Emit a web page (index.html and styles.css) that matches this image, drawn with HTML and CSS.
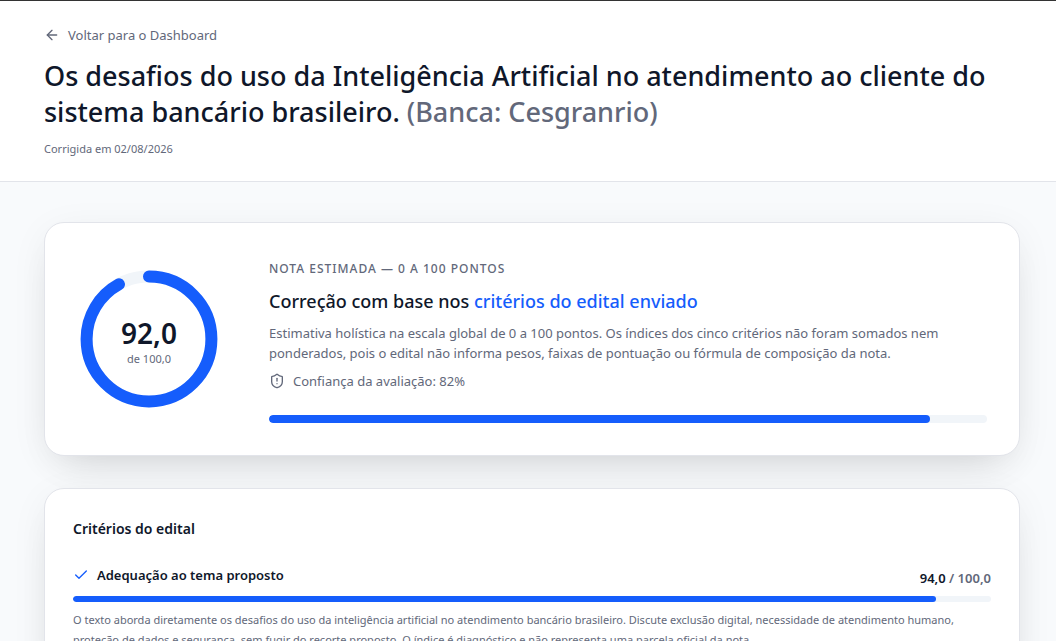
FILE: index.html
```html
<!DOCTYPE html>
<html lang="pt-BR">
<head>
  <meta charset="UTF-8" />
  <meta name="viewport" content="width=device-width, initial-scale=1.0" />
  <title>Correção da redação</title>
  <link rel="stylesheet" href="styles.css">
</head>
<body>
  <header class="page-header">
    <a class="back-link" href="#">
      <svg class="icon" viewBox="0 0 24 24" aria-hidden="true">
        <path d="m12 19-7-7 7-7" />
        <path d="M19 12H5" />
      </svg>
      Voltar para o Dashboard
    </a>
    <h1 class="page-title">Os desafios do uso da Inteligência Artificial no atendimento ao cliente do sistema bancário brasileiro. <span class="muted">(Banca: Cesgranrio)</span></h1>
    <p class="page-date">Corrigida em 02/08/2026</p>
  </header>

  <main class="content">
    <section class="card score-card">
      <div class="ring">
        <svg class="ring-svg" viewBox="0 0 120 120" aria-hidden="true">
          <circle class="ring-track" cx="60" cy="60" r="52" />
          <circle class="ring-fill" cx="60" cy="60" r="52" pathLength="100" stroke-dasharray="92 100" />
        </svg>
        <div class="ring-text">
          <span class="ring-value">92,0</span>
          <span class="ring-max">de 100,0</span>
        </div>
      </div>

      <div class="score-info">
        <p class="eyebrow">Nota estimada — 0 a 100 pontos</p>
        <h2 class="score-title">Correção com base nos <span class="accent">critérios do edital enviado</span></h2>
        <p class="score-text">Estimativa holística na escala global de 0 a 100 pontos. Os índices dos cinco critérios não foram somados nem ponderados, pois o edital não informa pesos, faixas de pontuação ou fórmula de composição da nota.</p>
        <p class="confidence">
          <svg class="icon" viewBox="0 0 24 24" aria-hidden="true">
            <path d="M20 13c0 5-3.5 7.5-7.66 8.95a1 1 0 0 1-.67-.01C7.5 20.5 4 18 4 13V6a1 1 0 0 1 1-1c2 0 4.5-1.2 6.24-2.72a1.17 1.17 0 0 1 1.52 0C14.51 3.81 17 5 19 5a1 1 0 0 1 1 1z" />
            <path d="M12 8v4" />
            <path d="M12 16h.01" />
          </svg>
          Confiança da avaliação: 82%
        </p>
        <div class="bar"><div class="bar-fill" style="width: 92%"></div></div>
      </div>
    </section>

    <section class="card criteria-card">
      <h2 class="criteria-title">Critérios do edital</h2>
      <article class="criterion">
        <div class="criterion-head">
          <h3 class="criterion-name">
            <svg class="icon accent" viewBox="0 0 24 24" aria-hidden="true">
              <path d="M20 6 9 17l-5-5" />
            </svg>
            Adequação ao tema proposto
          </h3>
          <span class="criterion-score">94,0 <span class="muted">/ 100,0</span></span>
        </div>
        <div class="bar bar-thin"><div class="bar-fill" style="width: 94%"></div></div>
        <p class="criterion-text">O texto aborda diretamente os desafios do uso da inteligência artificial no atendimento bancário brasileiro. Discute exclusão digital, necessidade de atendimento humano, proteção de dados e segurança, sem fugir do recorte proposto. O índice é diagnóstico e não representa uma parcela oficial da nota.</p>
      </article>
    </section>
  </main>
</body>
</html>
```

FILE: styles.css
```css
:root {
  --bg: #f8fafc;
  --surface: #ffffff;
  --text: #0f172a;
  --muted: #62687a;
  --border: #e2e4ea;
  --track: #f1f5f9;
  --accent: #155dfc;
}

* {
  box-sizing: border-box;
}

body {
  margin: 0;
  background: var(--bg);
  color: var(--text);
  font-family: "Noto Sans", "Open Sans", sans-serif;
  font-size: 13px;
  line-height: 20px;
}

h1,
h2,
h3,
p {
  margin: 0;
  font-weight: 600;
}

p {
  font-weight: 400;
}

.muted {
  color: var(--muted);
}

.accent {
  color: var(--accent);
}

.icon {
  flex: none;
  width: 16px;
  height: 16px;
  fill: none;
  stroke: currentColor;
  stroke-width: 2;
  stroke-linecap: round;
  stroke-linejoin: round;
}

.page-header {
  padding: 24px 36px 22px 44px;
  background: var(--surface);
  border-top: 1px solid #333333;
  border-bottom: 1px solid var(--border);
}

.back-link {
  display: flex;
  align-items: center;
  gap: 8px;
  width: fit-content;
  color: var(--muted);
  text-decoration: none;
}

.page-title {
  margin-top: 13px;
  font-size: 27px;
  font-weight: 500;
  line-height: 36px;
}

.page-date {
  margin-top: 9px;
  font-size: 11px;
  color: var(--muted);
}

.content {
  display: flex;
  flex-direction: column;
  gap: 32px;
  padding: 40px 36px 40px 44px;
}

.card {
  background: var(--surface);
  border: 1px solid var(--border);
  border-radius: 20px;
  box-shadow: 0 8px 40px -4px rgba(0, 0, 0, 0.07), 0 20px 40px -20px rgba(0, 0, 0, 0.14);
}

.score-card {
  display: flex;
  align-items: center;
  gap: 48px;
  padding: 32px;
}

.ring {
  position: relative;
  flex: none;
  width: 144px;
  height: 144px;
}

.ring-svg {
  display: block;
  transform: rotate(-90deg);
}

.ring-track,
.ring-fill {
  fill: none;
  stroke: var(--track);
  stroke-width: 10;
}

.ring-fill {
  stroke: var(--accent);
  stroke-linecap: round;
}

.ring-text {
  position: absolute;
  inset: 0;
  display: flex;
  flex-direction: column;
  align-items: center;
  justify-content: center;
}

.ring-value {
  font-size: 28px;
  font-weight: 600;
  line-height: 40px;
}

.ring-max {
  font-size: 11px;
  line-height: 12px;
  color: var(--muted);
}

.score-info {
  flex: 1;
  min-width: 0;
  padding-top: 4px;
}

.eyebrow {
  font-size: 12px;
  font-weight: 500;
  letter-spacing: 1px;
  text-transform: uppercase;
  color: var(--muted);
}

.score-title {
  margin-top: 8px;
  font-size: 18px;
  font-weight: 500;
  line-height: 28px;
}

.score-text {
  margin-top: 8px;
  color: var(--muted);
}

.confidence {
  display: flex;
  align-items: center;
  gap: 8px;
  margin-top: 8px;
  color: var(--muted);
}

.bar {
  height: 8px;
  margin-top: 24px;
  overflow: hidden;
  background: var(--track);
  border-radius: 8px;
}

.bar-fill {
  height: 100%;
  background: var(--accent);
  border-radius: 8px;
}

.bar-thin {
  height: 6px;
  margin-top: 8px;
}

.criteria-card {
  padding: 28px;
}

.criteria-title {
  font-size: 14px;
  line-height: 24px;
}

.criterion {
  margin-top: 24px;
}

.criterion-head {
  display: flex;
  align-items: flex-end;
  justify-content: space-between;
  gap: 16px;
}

.criterion-name {
  display: flex;
  align-items: center;
  gap: 8px;
  padding-bottom: 3px;
  font-size: 13px;
}

.criterion-score {
  font-weight: 600;
}

.criterion-text {
  margin-top: 8px;
  font-size: 11px;
  color: var(--muted);
}

@media (max-width: 700px) {
  .score-card {
    flex-direction: column;
    align-items: stretch;
  }

  .ring {
    align-self: center;
  }
}
```
